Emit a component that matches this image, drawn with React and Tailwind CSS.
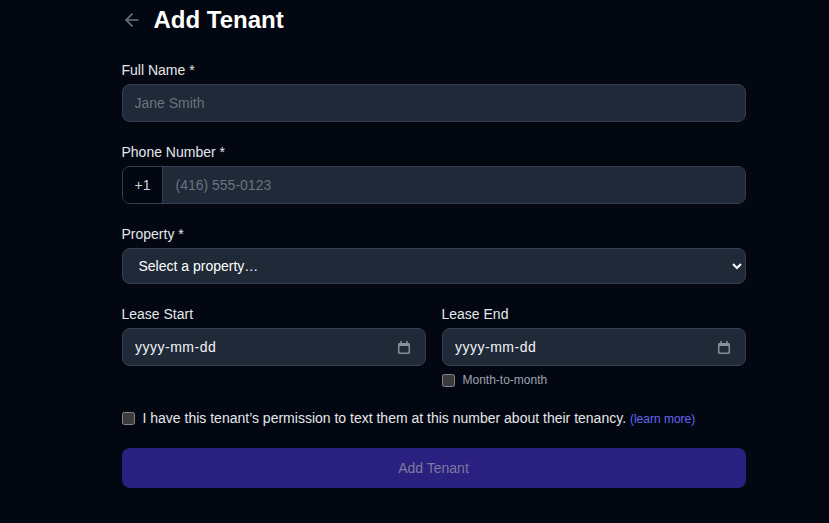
import React from "react";

const label = "block text-sm leading-5 text-[#e5e7eb] mb-1";
const field = "w-full h-[38px] rounded-lg border border-[#374151] bg-[#1f2937] px-3 text-sm text-white placeholder:text-[#6b7280] outline-none";

function CalendarIcon() {
  return (
    <svg width="12" height="13" viewBox="0 0 12 13" fill="none" className="shrink-0">
      <rect x="0.75" y="2.75" width="10.5" height="9.5" rx="0.8" stroke="#8b9098" strokeWidth="1.5" />
      <path d="M0.5 2.5h11v2.5h-11z" fill="#8b9098" />
      <path d="M3 0v2.5M9 0v2.5" stroke="#8b9098" strokeWidth="1.5" />
    </svg>
  );
}

function DateField() {
  return (
    <div className="flex items-center w-full h-[38px] rounded-lg border border-[#374151] bg-[#1f2937] pl-[12.5px] pr-[15px]">
      <input
        readOnly
        value="yyyy-mm-dd"
        className="flex-1 min-w-0 bg-transparent text-sm tracking-[0.5px] text-[#f3f4f6] outline-none"
      />
      <CalendarIcon />
    </div>
  );
}

export default function App() {
  return (
    <div className="min-h-[523px] bg-[#030712] [color-scheme:dark] overflow-hidden font-['Liberation_Sans',Arial,sans-serif]">
      <div className="w-[624px] ml-[121.5px] pt-1 pb-[35px]">
        <div className="flex items-center gap-3 h-8 mb-6">
          <svg width="20" height="20" viewBox="0 0 24 24" fill="none" stroke="#6b7280" strokeWidth="2" strokeLinecap="round" strokeLinejoin="round">
            <path d="M19 12H5" />
            <path d="M12 19l-7-7 7-7" />
          </svg>
          <h1 className="text-2xl font-bold text-white leading-8">Add Tenant</h1>
        </div>

        <form className="flex flex-col gap-5">
          <div>
            <label className={label}>Full Name *</label>
            <input className={field} placeholder="Jane Smith" />
          </div>

          <div>
            <label className={label}>Phone Number *</label>
            <div className="flex h-[38px] rounded-lg border border-[#374151] overflow-hidden">
              <span className="flex items-center px-3 text-sm text-[#d1d5db] bg-[#030712] border-r border-[#374151]">+1</span>
              <input className="flex-1 min-w-0 bg-[#1f2937] px-3 text-sm text-white placeholder:text-[#6b7280] outline-none" placeholder="(416) 555-0123" />
            </div>
          </div>

          <div>
            <label className={label}>Property *</label>
            <select className="w-full h-9 rounded-lg border border-[#374151] bg-[#1f2937] px-3 text-sm text-white outline-none">
              <option>Select a property…</option>
            </select>
          </div>

          <div className="grid grid-cols-2 gap-4">
            <div>
              <label className={label}>Lease Start</label>
              <DateField />
            </div>
            <div>
              <label className={label}>Lease End</label>
              <DateField />
              <label className="flex items-center gap-2 mt-[6px] text-xs leading-4 text-[#9ca3af]">
                <input type="checkbox" className="m-0 w-[13px] h-[13px]" />
                Month-to-month
              </label>
            </div>
          </div>

          <label className="flex items-center gap-2 text-sm leading-5 text-[#e5e7eb]">
            <input type="checkbox" className="m-0 w-[13px] h-[13px]" />
            <span>
              I have this tenant’s permission to text them at this number about their tenancy.{" "}
              <a className="text-xs text-[#6366f1]">(learn more)</a>
            </span>
          </label>

          <button type="button" disabled className="w-full h-10 rounded-lg bg-[#2a2080] text-sm font-medium text-[#7d7a9f]">
            Add Tenant
          </button>
        </form>
      </div>
    </div>
  );
}
